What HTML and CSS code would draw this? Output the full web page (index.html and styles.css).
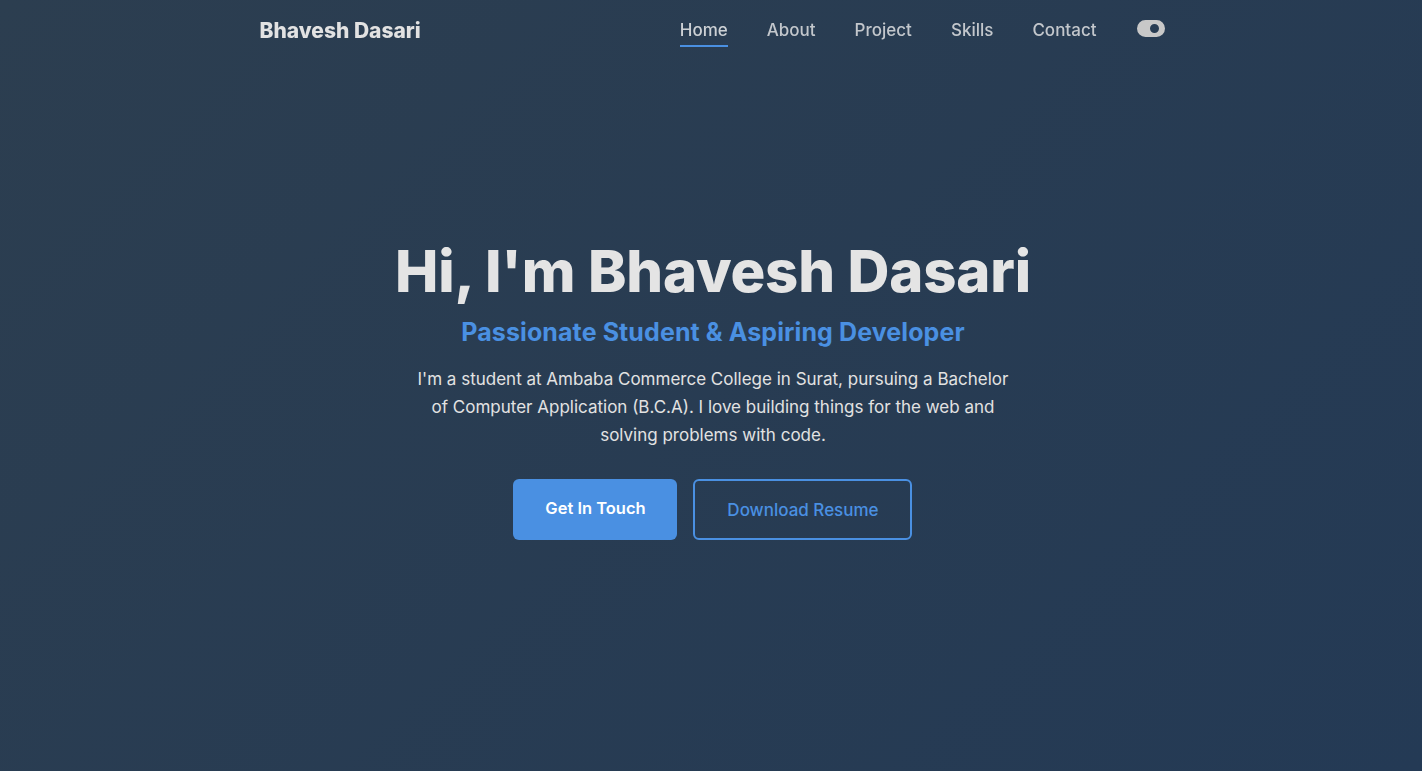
FILE: index.html
```html
<!DOCTYPE html>
<html lang="en">
<head>
<meta charset="utf-8">
<title>Bhavesh Dasari</title>
<link rel="stylesheet" href="styles.css">
</head>
<body>
<header class="site-header">
  <div class="header-inner">
    <a class="logo" href="#">Bhavesh Dasari</a>
    <nav class="nav">
      <a class="nav-link active" href="#">Home</a>
      <a class="nav-link" href="#">About</a>
      <a class="nav-link" href="#">Project</a>
      <a class="nav-link" href="#">Skills</a>
      <a class="nav-link" href="#">Contact</a>
      <button class="theme-toggle" aria-label="Toggle theme">
        <svg width="28" height="17" viewBox="0 0 28 17"><path fill-rule="evenodd" d="M8.5 0h11a8.5 8.5 0 0 1 0 17h-11a8.5 8.5 0 0 1 0-17z M13 8.5a4.5 4.5 0 1 0 9 0a4.5 4.5 0 1 0-9 0z"/></svg>
      </button>
    </nav>
  </div>
</header>
<main class="hero">
  <div class="hero-content">
    <h1 class="hero-title">Hi, I'm Bhavesh Dasari</h1>
    <h2 class="hero-subtitle">Passionate Student &amp; Aspiring Developer</h2>
    <p class="hero-text">I'm a student at Ambaba Commerce College in Surat, pursuing a Bachelor of Computer Application (B.C.A). I love building things for the web and solving problems with code.</p>
    <div class="hero-actions">
      <a class="btn btn-primary" href="#">Get In Touch</a>
      <a class="btn btn-outline" href="#">Download Resume</a>
    </div>
  </div>
</main>
</body>
</html>
```

FILE: styles.css
```css
* { box-sizing: border-box; }
html, body { margin: 0; padding: 0; }
body {
  font-family: "Inter", "Open Sans", sans-serif;
  color: #e0e0e0;
  background: linear-gradient(135deg, #2c3e50 0%, #243a55 100%);
  min-height: 100vh;
}
a { text-decoration: none; color: inherit; }

.site-header {
  position: fixed;
  top: 0; left: 0; right: 0;
  z-index: 10;
}
.header-inner {
  max-width: 907px;
  margin: 0 auto;
  padding-left: 2px;
  height: 60px;
  display: flex;
  align-items: center;
  justify-content: space-between;
}
.logo {
  font-size: 21px;
  font-weight: 800;
  color: #e2e2e2;
}
.nav {
  display: flex;
  align-items: center;
  gap: 39px;
}
.nav-link {
  font-size: 17px;
  font-weight: 500;
  color: #c3c7cc;
  position: relative;
  padding: 6px 0;
}
.nav-link.active { color: #cdd1d5; }
.nav-link.active::after {
  content: "";
  position: absolute;
  left: 0; right: 0;
  bottom: -1px;
  height: 2px;
  background: #4a90e2;
}
.theme-toggle {
  background: none;
  border: 0;
  padding: 0;
  display: flex;
  margin-top: -3px;
  margin-left: 1px;
}
.theme-toggle svg { fill: #c8c8c8; }

.hero {
  height: 100vh;
  display: flex;
  align-items: center;
  justify-content: center;
  text-align: center;
  padding-left: 4px;
}
.hero-content {
  display: flex;
  flex-direction: column;
  align-items: center;
  padding-top: 6px;
}
.hero-title {
  margin: 0;
  font-size: 58px;
  font-weight: 800;
  line-height: 1.2;
  color: #e4e4e4;
  letter-spacing: -0.15px;
}
.hero-subtitle {
  margin: 9px 0 0;
  font-size: 25px;
  font-weight: 700;
  line-height: 1.3;
  color: #4a90e2;
  letter-spacing: 0.1px;
}
.hero-text {
  margin: 17px 0 0;
  max-width: 600px;
  font-size: 17px;
  line-height: 28px;
  color: #e2e2e2;
}
.hero-actions {
  margin-top: 30px;
  display: flex;
  gap: 16px;
}
.btn {
  display: flex;
  align-items: center;
  justify-content: center;
  height: 61px;
  border-radius: 6px;
}
.btn-primary {
  width: 164px;
  background: #4a90e2;
  color: #ffffff;
  font-size: 16.5px;
  font-weight: 600;
  padding-bottom: 4px;
}
.btn-outline {
  width: 219px;
  border: 2px solid #4a90e2;
  color: #4a90e2;
  font-size: 17px;
  font-weight: 500;
}
```
